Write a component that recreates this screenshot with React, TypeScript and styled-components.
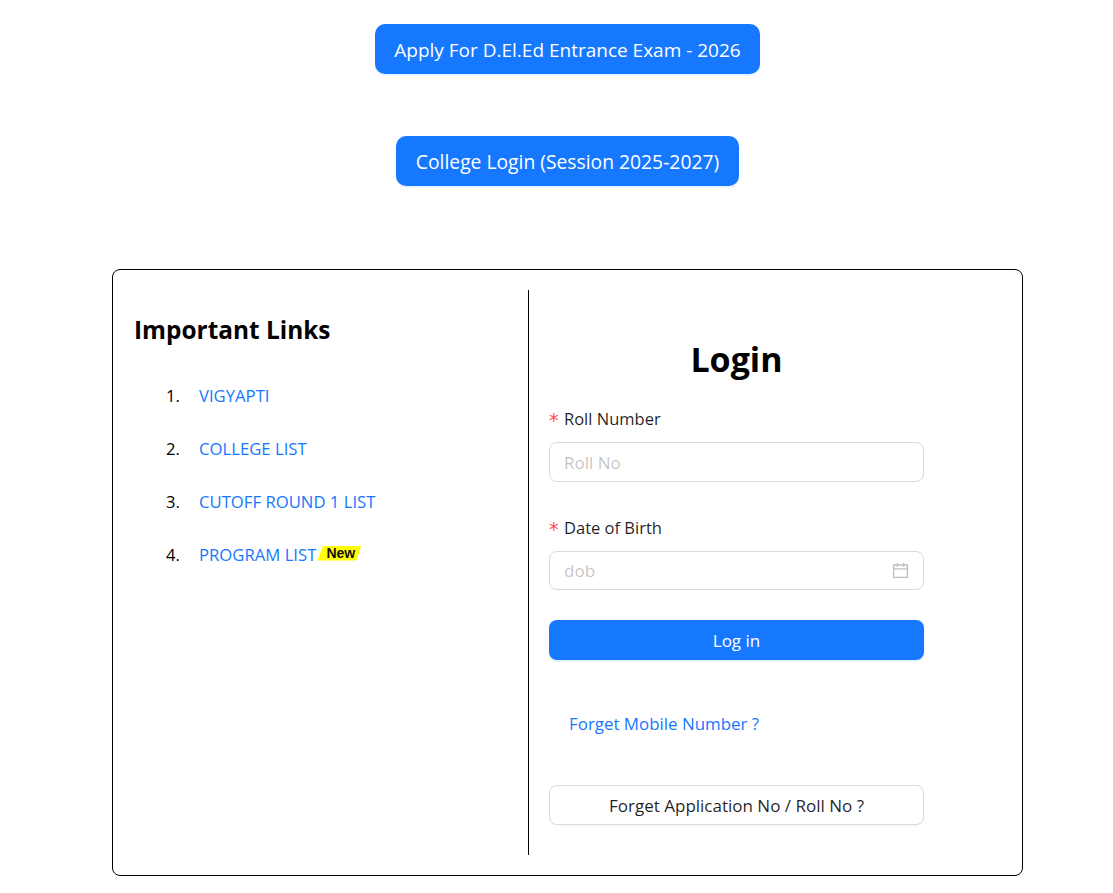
import React from "react";
import styled, { createGlobalStyle } from "styled-components";

const Global = createGlobalStyle`
  html, body { margin: 0; padding: 0; background: #fff; }
  body { font-family: "Open Sans", "Noto Sans", "Liberation Sans", sans-serif; color: rgba(0,0,0,.88); }
  * { box-sizing: border-box; }
`;

const Page = styled.div`
  width: 1113px;
  height: 893px;
  overflow: hidden;
  padding: 24px 0 0 22px;
`;
const TopActions = styled.div`
  display: flex;
  flex-direction: column;
  align-items: center;
  gap: 62px;
  margin-bottom: 83px;
`;
const HeroButton = styled.button<{ $size: number; $pad: number }>`
  height: 50px;
  padding: 1px ${(p) => p.$pad}px 0;
  border: none;
  border-radius: 10px;
  background: #1677ff;
  color: #fff;
  font-family: inherit;
  font-size: ${(p) => p.$size}px;
  box-shadow: 0 2px 0 rgba(5,145,255,.1);
  white-space: nowrap;
`;
const Card = styled.div`
  width: 911px;
  height: 607px;
  margin: 0 auto;
  border: 1px solid #000;
  border-radius: 8px;
  padding: 20px;
  display: flex;
`;
const LeftCol = styled.section`
  width: 396px;
  border-right: 1px solid #000;
  padding: 23px 0 0 1px;
`;
const Heading = styled.h2`
  margin: 0 0 36px;
  font-size: 24.4px;
  line-height: 34px;
  font-weight: 700;
  color: #000;
`;
const LinkList = styled.ol`
  list-style: none;
  counter-reset: item;
  margin: 0;
  padding: 0 0 0 32px;
  display: flex;
  flex-direction: column;
  gap: 29px;
`;
const LinkItem = styled.li`
  counter-increment: item;
  display: flex;
  align-items: center;
  height: 24px;
  font-size: 16.6px;
  &::before {
    content: counter(item) ".";
    width: 33px;
    color: #000;
  }
`;
const TextLink = styled.a<{ $size: number }>`
  color: #1677ff;
  text-decoration: none;
  font-size: ${(p) => p.$size}px;
`;
const NewBadge = styled.span`
  display: inline-flex;
  align-items: center;
  justify-content: center;
  width: 44px;
  height: 15px;
  margin: -2px 0 0 1px;
  padding-left: 3px;
  background: #ffff00;
  clip-path: polygon(6px 0, 100% 0, calc(100% - 5px) 100%, 0 100%);
  font-family: "Liberation Sans", Arial, sans-serif;
  font-size: 14px;
  font-weight: 700;
  color: #111;
`;
const RightCol = styled.section`
  width: 375px;
  margin-left: 20px;
  padding-top: 47px;
`;
const Title = styled.h1`
  margin: 0 0 25px;
  text-align: center;
  font-size: 34px;
  line-height: 44px;
  font-weight: 700;
  color: #000;
`;
const Field = styled.div`
  margin-bottom: 30px;
  & + & { margin-top: 33px; }
`;
const Label = styled.label`
  display: flex;
  align-items: center;
  height: 24px;
  margin-bottom: 12px;
  font-size: 16.5px;
  &::before {
    content: "*";
    color: #ff4d4f;
    width: 15px;
    font-family: "DejaVu Sans", sans-serif;
    font-size: 19px;
    margin-top: 4px;
  }
`;
const InputBox = styled.div<{ $h: number }>`
  display: flex;
  align-items: center;
  height: ${(p) => p.$h}px;
  padding: 0 14px 0 14px;
  border: 1px solid #d9d9d9;
  border-radius: 8px;
  background: #fff;
`;
const Input = styled.input`
  flex: 1;
  min-width: 0;
  border: none;
  outline: none;
  padding: 0;
  font-family: inherit;
  font-size: 17px;
  background: transparent;
  &::placeholder { color: rgba(0,0,0,.25); }
`;
const CalendarIcon = styled.svg`
  width: 17px;
  height: 17px;
  fill: rgba(0,0,0,.25);
`;
const SubmitButton = styled.button`
  display: block;
  width: 100%;
  height: 40px;
  padding-top: 2px;
  border: none;
  border-radius: 8px;
  background: #1677ff;
  color: #fff;
  font-family: inherit;
  font-size: 17px;
  box-shadow: 0 2px 0 rgba(5,145,255,.1);
`;
const ForgetRow = styled.div`
  height: 125px;
  padding: 52px 0 0 20px;
  line-height: 24px;
`;
const GhostButton = styled.button`
  display: block;
  width: 100%;
  height: 40px;
  padding-top: 2px;
  border: 1px solid #d9d9d9;
  border-radius: 8px;
  background: #fff;
  color: rgba(0,0,0,.88);
  font-family: inherit;
  font-size: 17px;
  box-shadow: 0 2px 0 rgba(0,0,0,.02);
`;

const links = ["VIGYAPTI", "COLLEGE LIST", "CUTOFF ROUND 1 LIST", "PROGRAM LIST"];

export default function App() {
  return (
    <>
      <Global />
      <Page>
        <TopActions>
          <HeroButton $size={19} $pad={19}>Apply For D.El.Ed Entrance Exam - 2026</HeroButton>
          <HeroButton $size={19.3} $pad={20}>College Login (Session 2025-2027)</HeroButton>
        </TopActions>
        <Card>
          <LeftCol>
            <Heading>Important Links</Heading>
            <LinkList>
              {links.map((l, i) => (
                <LinkItem key={l}>
                  <TextLink $size={16.7} href="#">{l}</TextLink>
                  {i === 3 && <NewBadge>New</NewBadge>}
                </LinkItem>
              ))}
            </LinkList>
          </LeftCol>
          <RightCol>
            <Title>Login</Title>
            <Field>
              <Label>Roll Number</Label>
              <InputBox $h={40}>
                <Input placeholder="Roll No" />
              </InputBox>
            </Field>
            <Field>
              <Label>Date of Birth</Label>
              <InputBox $h={39}>
                <Input placeholder="dob" />
                <CalendarIcon viewBox="64 64 896 896">
                  <path d="M880 184H712v-64c0-4.4-3.6-8-8-8h-56c-4.4 0-8 3.6-8 8v64H384v-64c0-4.4-3.6-8-8-8h-56c-4.4 0-8 3.6-8 8v64H144c-17.7 0-32 14.3-32 32v664c0 17.7 14.3 32 32 32h736c17.7 0 32-14.3 32-32V216c0-17.7-14.3-32-32-32zm-40 656H184V460h656v380zM184 392V256h128v48c0 4.4 3.6 8 8 8h56c4.4 0 8-3.6 8-8v-48h256v48c0 4.4 3.6 8 8 8h56c4.4 0 8-3.6 8-8v-48h128v136H184z" />
                </CalendarIcon>
              </InputBox>
            </Field>
            <SubmitButton>Log in</SubmitButton>
            <ForgetRow>
              <TextLink $size={16.9} href="#">Forget Mobile Number ?</TextLink>
            </ForgetRow>
            <GhostButton>Forget Application No / Roll No ?</GhostButton>
          </RightCol>
        </Card>
      </Page>
    </>
  );
}
